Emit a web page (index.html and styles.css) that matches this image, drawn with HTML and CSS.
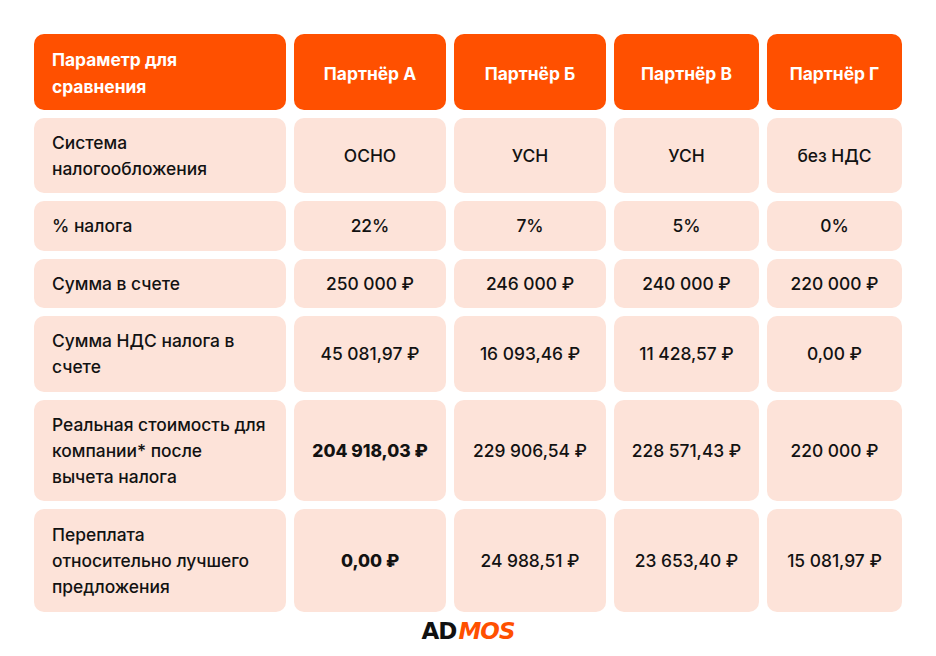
FILE: index.html
```html
<!DOCTYPE html>
<html lang="ru">
<head>
<meta charset="utf-8">
<link rel="stylesheet" href="styles.css">
</head>
<body>
<main class="page">
  <div class="table">
    <div class="cell head first">Параметр для<br>сравнения</div>
    <div class="cell head">Партнёр А</div>
    <div class="cell head">Партнёр Б</div>
    <div class="cell head">Партнёр В</div>
    <div class="cell head">Партнёр Г</div>

    <div class="cell first">Система<br>налогообложения</div>
    <div class="cell">ОСНО</div>
    <div class="cell">УСН</div>
    <div class="cell">УСН</div>
    <div class="cell">без НДС</div>

    <div class="cell first">% налога</div>
    <div class="cell">22%</div>
    <div class="cell">7%</div>
    <div class="cell">5%</div>
    <div class="cell">0%</div>

    <div class="cell first">Сумма в счете</div>
    <div class="cell">250 000 ₽</div>
    <div class="cell">246 000 ₽</div>
    <div class="cell">240 000 ₽</div>
    <div class="cell">220 000 ₽</div>

    <div class="cell first">Сумма НДС налога в<br>счете</div>
    <div class="cell">45 081,97 ₽</div>
    <div class="cell">16 093,46 ₽</div>
    <div class="cell">11 428,57 ₽</div>
    <div class="cell">0,00 ₽</div>

    <div class="cell first">Реальная стоимость для<br>компании* после<br>вычета налога</div>
    <div class="cell best">204 918,03 ₽</div>
    <div class="cell">229 906,54 ₽</div>
    <div class="cell">228 571,43 ₽</div>
    <div class="cell">220 000 ₽</div>

    <div class="cell first">Переплата<br>относительно лучшего<br>предложения</div>
    <div class="cell best">0,00 ₽</div>
    <div class="cell">24 988,51 ₽</div>
    <div class="cell">23 653,40 ₽</div>
    <div class="cell">15 081,97 ₽</div>
  </div>
  <div class="logo"><span class="ad">AD</span><span class="mos">MOS</span></div>
</main>
</body>
</html>
```

FILE: styles.css
```css
* { box-sizing: border-box; }
html, body { margin: 0; padding: 0; background: #ffffff; }
body {
  font-family: "Inter", "DejaVu Sans", sans-serif;
  color: #121212;
}
.page {
  width: 936px;
  height: 656px;
  padding: 34px 34px 0 34px;
}
.table {
  display: grid;
  grid-template-columns: 252px 152px 152px 145px 135px;
  grid-template-rows: 76px 75px 50px 49px 76px 101px 103px;
  column-gap: 8px;
  row-gap: 8px;
}
.cell {
  background: #fde3d9;
  border-radius: 10px;
  padding: 0 8px;
  font-size: 17.4px;
  font-weight: 500;
  line-height: 26px;
  display: flex;
  align-items: center;
  justify-content: center;
  text-align: center;
  white-space: nowrap;
}
.cell.first {
  justify-content: flex-start;
  text-align: left;
  padding-left: 18px;
}
.cell.head {
  background: #ff5000;
  color: #ffffff;
  font-weight: 700;
  line-height: 27px;
  padding-top: 2px;
}
.cell.best { font-weight: 800; }
.logo {
  display: flex;
  justify-content: center;
  margin-top: 7px;
  font-family: "DejaVu Sans", sans-serif;
  font-weight: 700;
  font-size: 23px;
  line-height: 24px;
  letter-spacing: -1px;
}
.logo .ad { color: #111111; }
.logo .mos { color: #ff5000; font-style: italic; margin-left: 2px; }
```
